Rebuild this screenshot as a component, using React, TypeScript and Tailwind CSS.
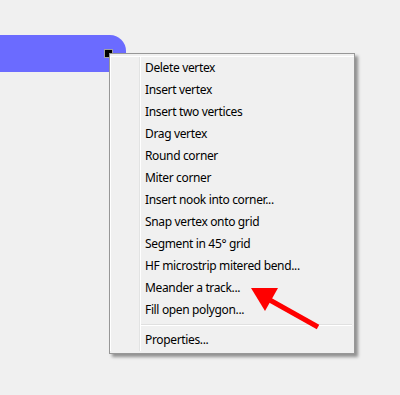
const items = [
  "Delete vertex",
  "Insert vertex",
  "Insert two vertices",
  "Drag vertex",
  "Round corner",
  "Miter corner",
  "Insert nook into corner...",
  "Snap vertex onto grid",
  "Segment in 45° grid",
  "HF microstrip mitered bend...",
  "Meander a track...",
  "Fill open polygon...",
];

function MenuItem({ label }: { label: string }) {
  return (
    <div className="flex h-[22px] items-center">
      <div className="w-[28px] shrink-0" />
      <div className="flex h-full w-[2px] shrink-0">
        <div className="w-px bg-[#e2e3e3]" />
        <div className="w-px bg-white" />
      </div>
      <span className="pl-[4px] text-[12px] leading-none tracking-[-0.35px] text-[#000]">{label}</span>
    </div>
  );
}

export default function App() {
  return (
    <div
      className="relative h-[395px] w-[400px] overflow-hidden bg-[#f0f0f0]"
      style={{ fontFamily: '"Segoe UI", "Noto Sans", sans-serif' }}
    >
      {/* polygon on the canvas */}
      <div className="absolute left-0 top-[35px] h-[37px] w-[126px] rounded-tr-[16px] bg-[#6b6bff]" />
      <div className="absolute left-[104px] top-[49px] h-[9px] w-[9px] border border-[#a0a0a0] bg-black" />

      {/* context menu */}
      <div className="absolute left-[109px] top-[53px] w-[246px] border border-[#979797] bg-[#f0f0f0] py-[2px] shadow-[3px_3px_3px_rgba(0,0,0,0.4)]">
        <div className="border-l border-t border-white">
          {items.map((label) => (
            <MenuItem key={label} label={label} />
          ))}
          <div className="flex h-[8px] items-center">
            <div className="w-[28px] shrink-0" />
            <div className="flex h-full w-[2px] shrink-0">
              <div className="w-px bg-[#e2e3e3]" />
              <div className="w-px bg-white" />
            </div>
            <div className="mr-[2px] flex-1">
              <div className="h-px bg-[#e0e0e0]" />
              <div className="h-px bg-white" />
            </div>
          </div>
          <MenuItem label="Properties..." />
        </div>
      </div>

      {/* red arrow */}
      <svg className="absolute left-0 top-0" width="400" height="395" viewBox="0 0 400 395">
        <line x1="318" y1="327" x2="268" y2="299" stroke="#ff0000" strokeWidth="5" />
        <polygon points="251,288 278,288 265,311" fill="#ff0000" />
      </svg>
    </div>
  );
}
